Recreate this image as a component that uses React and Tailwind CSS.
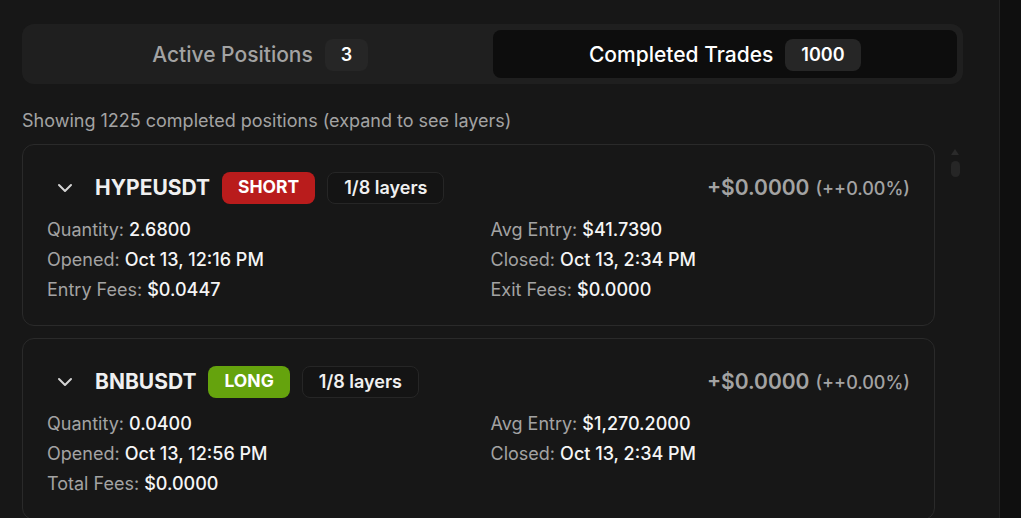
import React from "react";
import { ChevronDown } from "lucide-react";

const positions = [
  {
    symbol: "HYPEUSDT",
    side: "SHORT",
    layers: "1/8 layers",
    pnl: "+$0.0000",
    pct: "(++0.00%)",
    left: [
      ["Quantity:", "2.6800"],
      ["Opened:", "Oct 13, 12:16 PM"],
      ["Entry Fees:", "$0.0447"],
    ],
    right: [
      ["Avg Entry:", "$41.7390"],
      ["Closed:", "Oct 13, 2:34 PM"],
      ["Exit Fees:", "$0.0000"],
    ],
  },
  {
    symbol: "BNBUSDT",
    side: "LONG",
    layers: "1/8 layers",
    pnl: "+$0.0000",
    pct: "(++0.00%)",
    left: [
      ["Quantity:", "0.0400"],
      ["Opened:", "Oct 13, 12:56 PM"],
      ["Total Fees:", "$0.0000"],
    ],
    right: [
      ["Avg Entry:", "$1,270.2000"],
      ["Closed:", "Oct 13, 2:34 PM"],
    ],
  },
];

function Field({ label, value }) {
  return (
    <div className="text-lg leading-6">
      <span className="text-[#a3a3a3]">{label}</span>{" "}
      <span className="font-medium text-[#f5f5f5]">{value}</span>
    </div>
  );
}

function PositionCard({ p }) {
  return (
    <div className="rounded-xl border border-[#2a2a2a] bg-[#171717] px-6 pt-6 pb-[23px]">
      <div className="flex h-9 items-center justify-between pt-px">
        <div className="flex items-center gap-3">
          <button className="flex h-9 w-9 items-center justify-center text-[#d4d4d4]">
            <ChevronDown size={24} strokeWidth={2} />
          </button>
          <span className="text-[21px] font-bold text-[#f0f0f0]">{p.symbol}</span>
          <span
            className={
              p.side === "SHORT"
                ? "flex h-8 items-center rounded-lg bg-[#b91c1c] px-4 text-[17.5px] font-bold text-white"
                : "flex h-8 items-center rounded-lg bg-[#65a30d] px-4 text-[17.5px] font-bold text-white"
            }
          >
            {p.side}
          </span>
          <span className="flex h-8 items-center rounded-lg border border-[#262626] bg-[#141414] px-4 text-lg font-semibold text-[#f0f0f0]">
            {p.layers}
          </span>
        </div>
        <div className="flex items-baseline gap-1.5 text-[#a3a3a3]">
          <span className="text-[21px] font-semibold">{p.pnl}</span>
          <span className="text-lg font-medium">{p.pct}</span>
        </div>
      </div>
      <div className="mt-[13px] grid grid-cols-2 gap-x-6">
        <div className="flex flex-col gap-1.5">
          {p.left.map(([l, v]) => (
            <Field key={l} label={l} value={v} />
          ))}
        </div>
        <div className="flex flex-col gap-1.5">
          {p.right.map(([l, v]) => (
            <Field key={l} label={l} value={v} />
          ))}
        </div>
      </div>
    </div>
  );
}

export default function App() {
  return (
    <div
      className="flex h-[518px] w-[1021px] overflow-hidden bg-[#171717]"
      style={{ fontFamily: "Inter, 'Noto Sans', sans-serif" }}
    >
      <main className="flex w-[1000px] flex-col border-r border-[#232323] pl-[22px] pr-[36px] pt-6">
        <div className="grid h-[60px] grid-cols-2 rounded-xl bg-[#1f1f1f] p-1.5">
          <button className="flex items-center justify-center gap-3 rounded-lg pt-px text-[21px] font-medium text-[#a3a3a3]">
            Active Positions
            <span className="flex h-8 items-center rounded-lg bg-[#262626] px-4 text-lg font-semibold text-white">
              3
            </span>
          </button>
          <button className="flex items-center justify-center gap-3 rounded-lg bg-[#0d0d0d] pt-px text-[21px] font-medium text-white">
            Completed Trades
            <span className="flex h-8 items-center rounded-lg bg-[#262626] px-4 text-lg font-semibold text-white">
              1000
            </span>
          </button>
        </div>
        <p className="mt-[25px] mb-[11px] text-lg leading-6 text-[#a3a3a3]">
          Showing 1225 completed positions (expand to see layers)
        </p>
        <div className="flex min-h-0 flex-1">
          <div className="flex flex-1 flex-col gap-3">
            {positions.map((p) => (
              <PositionCard key={p.symbol} p={p} />
            ))}
          </div>
          <div className="flex w-[28px] flex-col items-start gap-[6px] pl-4 pt-[5px]">
            <div className="h-0 w-0 border-x-[4.5px] border-b-[6px] border-x-transparent border-b-[#2a2a2a]" />
            <div className="h-[16px] w-[9px] rounded-full bg-[#262626]" />
          </div>
        </div>
      </main>
      <aside className="flex-1 bg-[#0f0f0f]" />
    </div>
  );
}
